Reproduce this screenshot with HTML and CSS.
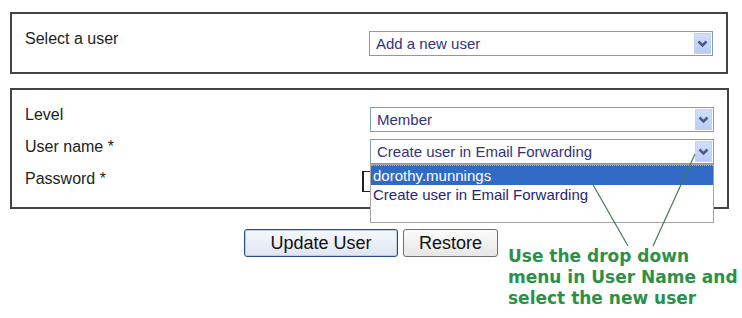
FILE: index.html
```html
<!DOCTYPE html>
<html>
<head>
    <title>Edit User</title>
    <meta charset="UTF-8">
    <link rel="stylesheet" href="styles.css">
</head>
<body>
    <!-- User picker -->
    <div class="panel panel-top">
        <div class="form-row">
            <span class="form-label">Select a user</span>
            <div class="select">
                <span class="select-text">Add a new user</span>
                <span class="select-arrow"><svg width="11" height="8" viewBox="0 0 11 8"><polyline points="1.5,1.5 5.5,5.5 9.5,1.5" fill="none" stroke="#4a5d84" stroke-width="2.6"/></svg></span>
            </div>
        </div>
    </div>

    <!-- User details -->
    <div class="panel panel-details">
        <div class="form-row">
            <span class="form-label">Level</span>
            <div class="select">
                <span class="select-text">Member</span>
                <span class="select-arrow"><svg width="11" height="8" viewBox="0 0 11 8"><polyline points="1.5,1.5 5.5,5.5 9.5,1.5" fill="none" stroke="#4a5d84" stroke-width="2.6"/></svg></span>
            </div>
        </div>
        <div class="form-row">
            <span class="form-label">User name *</span>
            <div class="select select-open">
                <span class="select-text">Create user in Email Forwarding</span>
                <span class="select-arrow"><svg width="11" height="8" viewBox="0 0 11 8"><polyline points="1.5,1.5 5.5,5.5 9.5,1.5" fill="none" stroke="#4a5d84" stroke-width="2.6"/></svg></span>
                <!-- open drop down list -->
                <div class="select-list">
                    <div class="option option-selected">dorothy.munnings</div>
                    <div class="option">Create user in Email Forwarding</div>
                </div>
            </div>
        </div>
        <div class="form-row">
            <span class="form-label">Password *</span>
            <div class="field-password">
                <input type="password" class="password-input">
            </div>
        </div>
    </div>

    <div class="buttons">
        <button class="btn btn-default">Update User</button>
        <button class="btn btn-restore">Restore</button>
    </div>

    <!-- Annotation -->
    <svg class="pointer-lines" width="742" height="318" viewBox="0 0 742 318">
        <line x1="592" y1="183" x2="628" y2="246" stroke="#3f7d55" stroke-width="1.2"/>
        <line x1="695" y1="154" x2="653" y2="246" stroke="#3f7d55" stroke-width="1.2"/>
    </svg>
    <div class="note">Use the drop down<br>menu in User Name and<br>select the new user</div>
</body>
</html>
```

FILE: styles.css
```css
body {
    margin: 0;
    font-family: "Liberation Sans", Arial, sans-serif;
    color: #222;
    background: #fff;
    position: relative;
    width: 742px;
    height: 318px;
    overflow: hidden;
}
.panel {
    border: 2px solid #444;
    margin: 0 14px 0 10px;
    padding: 17px 12px 16px 13px;
}
.panel-top {
    margin-top: 12px;
}
.panel-details {
    margin-top: 14px;
    margin-right: 13px;
    padding-bottom: 15px;
}
.form-row {
    display: flex;
    justify-content: space-between;
    align-items: flex-start;
}
.form-row + .form-row {
    margin-top: 7px;
}
.form-label {
    font-size: 16px;
    line-height: 16px;
    color: #222;
}
.select {
    position: relative;
    width: 344px;
    height: 25px;
    box-sizing: border-box;
    border: 1px solid #7f9db9;
    background: #fff;
    display: flex;
    justify-content: space-between;
    margin-right: 1px;
}
.select-text {
    font-size: 15px;
    line-height: 23px;
    padding-left: 6px;
    color: #33337c;
}
.select-arrow {
    width: 17px;
    height: 21px;
    margin: 1px;
    border: 1px solid #c3d1f3;
    box-sizing: border-box;
    background: linear-gradient(#d3defc, #b9cbf5);
    display: flex;
    align-items: center;
    justify-content: center;
}
.select-list {
    position: absolute;
    top: 24px;
    left: -1px;
    right: -1px;
    height: 59px;
    box-sizing: border-box;
    border: 1px solid #a5a5a5;
    background: #fff;
    z-index: 2;
}
.option {
    font-size: 15px;
    line-height: 19px;
    padding-left: 2px;
    color: #26266e;
}
.option-selected {
    background: #316ac5;
    color: #fff;
    border-top: 1px dotted #9bb4e4;
}
.field-password {
    width: 353px;
}
.password-input {
    display: block;
    width: 200px;
    height: 21px;
    box-sizing: border-box;
    margin: 0;
    border: 1px solid #222;
    border-left-width: 2px;
}
.buttons {
    display: flex;
    justify-content: center;
    gap: 5px;
    margin-top: 20px;
    padding-left: 0;
}
.btn {
    height: 28px;
    font-family: "Liberation Sans", Arial, sans-serif;
    font-size: 18px;
    color: #111;
    border-radius: 3px;
    padding: 0;
}
.btn-default {
    width: 154px;
    border: 1px solid #2a4c8c;
    box-shadow: inset 0 0 0 1px #b9cdf0;
    background: linear-gradient(#f6f8fc, #dfe5f0);
}
.btn-restore {
    width: 95px;
    border: 1px solid #6f6f6f;
    background: linear-gradient(#fbfbfb, #e6e6e6);
}
.pointer-lines {
    position: absolute;
    left: 0;
    top: 0;
    z-index: 3;
}
.note {
    position: absolute;
    left: 508px;
    top: 246px;
    font-family: "DejaVu Sans", Verdana, sans-serif;
    font-weight: bold;
    font-size: 17px;
    line-height: 21px;
    color: #2b9148;
    white-space: nowrap;
}
```
